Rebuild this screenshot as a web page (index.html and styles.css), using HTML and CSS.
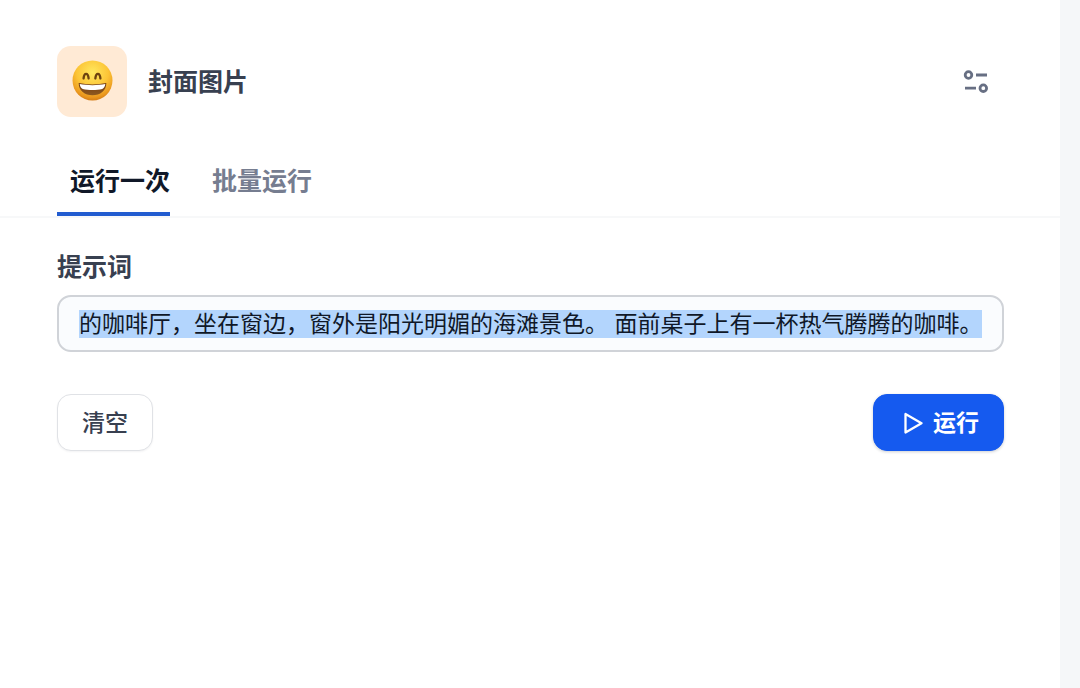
FILE: index.html
```html
<!DOCTYPE html>
<html lang="zh-CN">
<head>
<meta charset="utf-8">
<meta name="viewport" content="width=device-width, initial-scale=1">
<title>封面图片</title>
<link rel="stylesheet" href="styles.css">
</head>
<body>
<main class="panel">
  <header class="header">
    <div class="app-icon">
      <svg class="emoji" viewBox="0 0 40 40" role="img" aria-label="笑脸">
        <defs>
          <radialGradient id="face" cx="50%" cy="30%" r="72%">
            <stop offset="0" stop-color="#ffe85e"/>
            <stop offset="0.55" stop-color="#fcc436"/>
            <stop offset="0.86" stop-color="#ea971e"/>
            <stop offset="1" stop-color="#cf7714"/>
          </radialGradient>
          <linearGradient id="mouth" x1="0" y1="0" x2="0" y2="1">
            <stop offset="0" stop-color="#713b12"/>
            <stop offset="1" stop-color="#8f5a20"/>
          </linearGradient>
        </defs>
        <circle cx="20" cy="20" r="19.500" fill="url(#face)"/>
        <path d="M11.300 18C11.800 12 15.700 12 16.200 18M22.800 18C23.300 12 27.200 12 27.700 18" fill="none" stroke="#6d430f" stroke-width="2.300" stroke-linecap="round"/>
        <path d="M6.500 22.500C15 24.300 25 24.300 33.500 22.500C33.500 30 27.500 34.500 20 34.500S6.500 30 6.500 22.500Z" fill="url(#mouth)"/>
        <path d="M7.500 23.500C15 25 25 25 32.500 23.500C32.200 26 31 27.600 29.500 28.200C24 29.500 16 29.500 10.500 28.200C9 27.600 7.800 26 7.500 23.500Z" fill="#fff"/>
      </svg>
    </div>
    <h1 class="title">封面图片</h1>
    <button class="settings" type="button" aria-label="设置">
      <svg viewBox="0 0 26 26" fill="none" stroke="currentColor" stroke-width="2.800">
        <circle cx="5.500" cy="6" r="3.300"/>
        <path d="M13 6H24M2 19.200H13"/>
        <circle cx="20.300" cy="19.200" r="3.300"/>
      </svg>
    </button>
  </header>
  <nav class="tabs">
    <a class="tab tab-active" href="#once" aria-current="page">运行一次</a>
    <a class="tab" href="#batch">批量运行</a>
  </nav>
  <form class="form" id="once">
    <label class="label" for="prompt">提示词</label>
    <div class="field">
      <input class="field-input" id="prompt" type="text" autocomplete="off" spellcheck="false" value="的咖啡厅，坐在窗边，窗外是阳光明媚的海滩景色。 面前桌子上有一杯热气腾腾的咖啡。">
    </div>
    <div class="actions">
      <button class="btn" type="reset">清空</button>
      <button class="btn btn-primary" type="button">
        <svg class="play" viewBox="0 0 20 22" fill="none" stroke="currentColor" stroke-width="2.300" stroke-linejoin="round"><path d="M2.500 2V20.500L18.500 11.200Z"/></svg>
        运行
      </button>
    </div>
  </form>
</main>
<script src="main.js"></script>
</body>
</html>
```
FILE: styles.css
```css
* {
  box-sizing: border-box;
}

body {
  margin: 0;
  min-height: 100vh;
  padding-right: 20px;
  background: #f5f7f9;
  font-family: "Liberation Sans", "Noto Sans CJK SC", sans-serif;
  color: #384050;
}

.panel {
  min-height: 100vh;
  background: #fff;
}

.header {
  display: flex;
  align-items: center;
  padding: 46px 71px 0 57px;
}

.app-icon {
  display: flex;
  align-items: center;
  justify-content: center;
  width: 70px;
  height: 71px;
  padding-bottom: 2px;
  border-radius: 14px;
  background: #ffead5;
}

.emoji {
  width: 41px;
  height: 41px;
}

.title {
  flex: 1;
  margin: 0 0 0 21px;
  font-size: 25px;
  line-height: 36px;
  font-weight: 600;
}

.settings {
  width: 26px;
  height: 26px;
  padding: 0;
  border: 0;
  background: none;
  color: #676f83;
}

.settings svg {
  display: block;
}

.tabs {
  display: flex;
  gap: 42px;
  margin-top: 40px;
  padding-left: 57px;
  border-bottom: 2px solid #f7f8f9;
}

.tab {
  height: 59px;
  padding-top: 6px;
  border-bottom: 4px solid transparent;
  font-size: 25px;
  line-height: 36px;
  font-weight: 600;
  color: #767d90;
  text-decoration: none;
}

.tab-active {
  padding-left: 13px;
  border-color: #225cd0;
  color: #101828;
}

.form {
  padding: 31px 56px 0 57px;
}

.label {
  display: block;
  margin-bottom: 10px;
  font-size: 25px;
  line-height: 36px;
  font-weight: 600;
}

.field {
  padding: 13px 20px 12px;
  border: 2px solid #d0d3d8;
  border-radius: 14px;
  background: #fafcfe;
}

.field-input {
  display: block;
  width: 100%;
  height: 28px;
  padding: 0;
  border: 0;
  outline: 0;
  background: none;
  font-family: inherit;
  font-size: 23px;
  line-height: 28px;
  color: #101828;
}

.field-input::selection {
  background: #b3d5fd;
  color: #101828;
}

.actions {
  display: flex;
  justify-content: space-between;
  margin-top: 42px;
}

.btn {
  display: flex;
  align-items: center;
  gap: 10px;
  height: 57px;
  padding: 0 24px;
  border: 1px solid #e0e2e6;
  border-radius: 14px;
  background: #fff;
  box-shadow: 0 1px 2px #1018280d;
  font-family: inherit;
  font-size: 23px;
  line-height: 32px;
  font-weight: 500;
  color: #384050;
}

.btn-primary {
  padding-left: 29px;
  border-color: #155aef;
  background: #155aef;
  box-shadow: 0 1px 3px #10182833;
  font-weight: 600;
  color: #fff;
}

.play {
  width: 20px;
  height: 22px;
}
```
FILE: main.js
```js
const prompt = document.getElementById("prompt");
prompt.focus();
prompt.select();
```
